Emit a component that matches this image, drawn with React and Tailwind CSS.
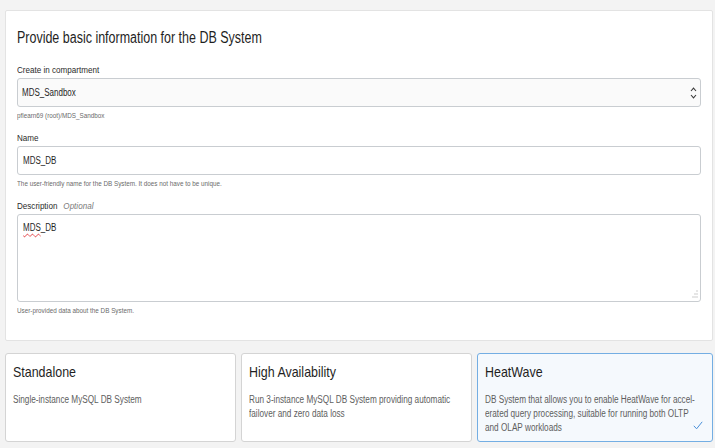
const font = { fontFamily: '"Liberation Sans", Arial, sans-serif' };

// the reference face is narrow; squeeze Liberation Sans to match its widths
const T = ({ s = 'scale-x-[0.8]', className = '', children }) => (
  <span className={`inline-block origin-left whitespace-nowrap ${s} ${className}`}>{children}</span>
);

const Field = ({ label, optional, help, children }) => (
  <div className="flex flex-col">
    <div className="mb-[2px] h-[12px] text-[9.5px] leading-[12px] text-[#2b2b2b]">
      <T s="scale-x-[0.85]">
        {label}
        {optional && <span className="ml-[7px] italic text-[#7a7a7a]">Optional</span>}
      </T>
    </div>
    {children}
    <div className="mt-[4px] h-[10px] text-[8px] leading-[10px] text-[#6b6b6b]">
      <T s="scale-x-[0.79]">{help}</T>
    </div>
  </div>
);

const ShapeCard = ({ title, desc, selected, className }) => (
  <div
    className={
      (selected
        ? 'relative min-w-0 rounded-[3px] border border-[#74aee3] bg-[#f5f9fd] px-[7px] pt-[9px] '
        : 'relative min-w-0 rounded-[3px] border border-[#d4d4d4] bg-white px-[7px] pt-[9px] ') + className
    }
  >
    <div className="h-[18px] text-[15px] leading-[18px] text-[#1f1f1f]">
      <T s="scale-x-[0.83]">{title}</T>
    </div>
    <div className="mt-[12px] text-[10px] leading-[14px] text-[#5e5e5e]">
      <T s="scale-x-[0.82]">{desc}</T>
    </div>
    {selected && (
      <svg className="absolute right-[9px] bottom-[11px]" width="10" height="9" viewBox="0 0 10 9">
        <path d="M0.8 4.8 L3.6 7.8 L9.2 0.8" fill="none" stroke="#4a90d9" strokeWidth="1" />
      </svg>
    )}
  </div>
);

export default function App() {
  return (
    <div className="h-[448px] w-[715px] bg-[#f3f3f3] pl-[5px] pr-[2px] pt-[10px]" style={font}>
      <div className="h-[331px] rounded-[2px] border border-[#e3e3e3] bg-white px-[11px] pt-[17px]">
        <h1 className="mb-[16px] h-[20px] text-[16px] leading-[20px] text-[#1f1f1f]">
          <T s="scale-x-[0.78]">Provide basic information for the DB System</T>
        </h1>
        <div className="flex flex-col gap-[11px]">
          <Field label="Create in compartment" help="pflearn69 (root)/MDS_Sandbox">
            <div className="flex h-[29px] items-center justify-between rounded-[3px] border border-[#c9cdd1] bg-[#fafafa] pl-[4px] pr-[3px]">
              <span className="text-[10px] leading-[12px] text-[#1f1f1f]">
                <T>MDS_Sandbox</T>
              </span>
              <svg width="7" height="12" viewBox="0 0 7 12">
                <path d="M1 4 L3.5 1.2 L6 4 M1 8 L3.5 10.8 L6 8" fill="none" stroke="#3a3a3a" strokeWidth="1.1" />
              </svg>
            </div>
          </Field>
          <Field label="Name" help="The user-friendly name for the DB System. It does not have to be unique.">
            <div className="flex h-[29px] items-center rounded-[3px] border border-[#c9cdd1] bg-white pl-[5px]">
              <span className="text-[10px] leading-[12px] text-[#1f1f1f]">
                <T>MDS_DB</T>
              </span>
            </div>
          </Field>
          <Field label="Description" optional help="User-provided data about the DB System.">
            <div className="relative h-[88px] rounded-[3px] border border-[#c9cdd1] bg-white pl-[5px] pt-[6px]">
              <div className="text-[10px] leading-[13px] text-[#1f1f1f]">
                <T>
                  <span className="underline decoration-wavy decoration-[#e0393e] decoration-[0.6px] underline-offset-[2px] [text-decoration-skip-ink:none]">
                    MDS
                  </span>
                  _DB
                </T>
              </div>
              <svg className="absolute right-[2px] bottom-[3px]" width="7" height="8" viewBox="0 0 7 8">
                <path
                  d="M6 0.5 V1.5 M4 3.5 V4.5 M6 3.5 V4.5 M2 6.5 V7.5 M4 6.5 V7.5 M6 6.5 V7.5"
                  stroke="#9a9a9a"
                  strokeWidth="1"
                />
              </svg>
            </div>
          </Field>
        </div>
      </div>
      <div className="mt-[12px] flex h-[89px] gap-[5px]">
        <ShapeCard className="w-[231px]" title="Standalone" desc="Single-instance MySQL DB System" />
        <ShapeCard
          className="w-[231px]"
          title="High Availability"
          desc={
            <>
              Run 3-instance MySQL DB System providing automatic
              <br />
              failover and zero data loss
            </>
          }
        />
        <ShapeCard
          selected
          className="flex-1"
          title="HeatWave"
          desc={
            <>
              DB System that allows you to enable HeatWave for accel-
              <br />
              erated query processing, suitable for running both OLTP
              <br />
              and OLAP workloads
            </>
          }
        />
      </div>
    </div>
  );
}
